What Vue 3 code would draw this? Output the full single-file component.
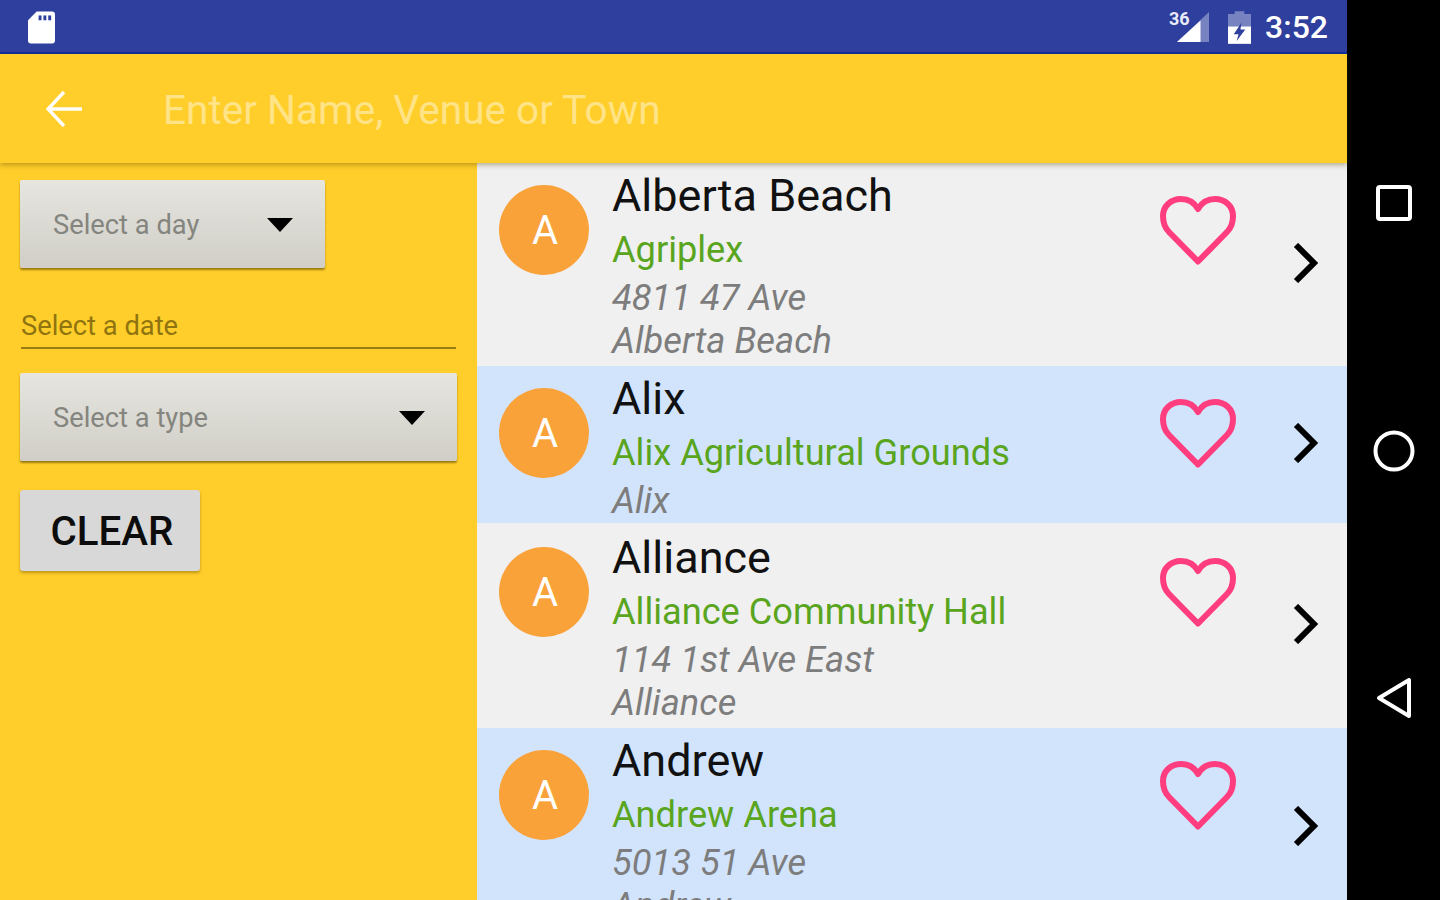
<script setup>
const rows = [
  { title: "Alberta Beach", venue: "Agriplex", lines: ["4811 47 Ave", "Alberta Beach"] },
  { title: "Alix", venue: "Alix Agricultural Grounds", lines: ["Alix"] },
  { title: "Alliance", venue: "Alliance Community Hall", lines: ["114 1st Ave East", "Alliance"] },
  { title: "Andrew", venue: "Andrew Arena", lines: ["5013 51 Ave", "Andrew"] },
];
</script>

<template>
  <div class="device">
    <div class="screen">
      <div class="status">
        <svg class="sd" viewBox="0 0 28 33">
          <path d="M9 0H25a3 3 0 0 1 3 3V30a3 3 0 0 1-3 3H3a3 3 0 0 1-3-3V9z" fill="#fff" />
          <rect x="11" y="4" width="3" height="5" fill="#2f3f9e" />
          <rect x="16" y="4" width="3" height="5" fill="#2f3f9e" />
          <rect x="21" y="4" width="3" height="5" fill="#2f3f9e" />
        </svg>
        <div class="status-right">
          <span class="net">36</span>
          <svg class="signal" viewBox="0 0 34 32">
            <path d="M34 0V32H0z" fill="#fff" opacity="0.35" />
            <path d="M25 9V32H0z" fill="#fff" />
          </svg>
          <svg class="battery" viewBox="0 0 24 34">
            <path d="M7 3V0h10v3h7v31H0V3z" fill="#fff" opacity="0.35" />
            <path d="M0 16H24V34H0z" fill="#fff" />
            <path d="M14 12 6 24h5l-2 7 9-12h-5z" fill="#2f3f9e" />
          </svg>
          <span class="time">3:52</span>
        </div>
      </div>

      <div class="appbar">
        <svg class="back" viewBox="0 0 36 36">
          <path d="M36 18H2M18 1 2 18l16 17" fill="none" stroke="#fff" stroke-width="3.4" />
        </svg>
        <span class="search">Enter Name, Venue or Town</span>
      </div>

      <div class="content">
        <div class="filters">
          <div class="spinner day">
            <span>Select a day</span>
            <i class="caret"></i>
          </div>
          <div class="date">Select a date</div>
          <div class="spinner type">
            <span>Select a type</span>
            <i class="caret"></i>
          </div>
          <button class="clear">CLEAR</button>
        </div>

        <div class="list">
          <div v-for="(row, i) in rows" :key="row.title" class="row" :class="{ alt: i % 2 === 1 }">
            <div class="avatar">A</div>
            <div class="text">
              <div class="title">{{ row.title }}</div>
              <div class="venue">{{ row.venue }}</div>
              <div v-for="line in row.lines" :key="line" class="addr">{{ line }}</div>
            </div>
            <svg class="heart" viewBox="0 0 76 70">
              <path d="M38 65.5 9 36C3 30 3 24 3 20 3 10 11 3 21 3c7 0 13 3 17 10 4-7 10-10 17-10 10 0 18 7 18 17 0 4 0 10-6 16z" fill="none" stroke="#ff3d7f" stroke-width="6" stroke-linejoin="round" />
            </svg>
            <svg class="chevron" viewBox="0 0 26 40">
              <path d="M3 2 21 20 3 38" fill="none" stroke="#000" stroke-width="6" />
            </svg>
          </div>
        </div>
      </div>
    </div>

    <div class="nav">
      <svg class="nav-square" viewBox="0 0 36 36">
        <rect x="2" y="2" width="32" height="32" rx="2" fill="none" stroke="#fff" stroke-width="4" />
      </svg>
      <svg class="nav-circle" viewBox="0 0 42 42">
        <circle cx="21" cy="21" r="18.5" fill="none" stroke="#fff" stroke-width="4" />
      </svg>
      <svg class="nav-back" viewBox="0 0 36 42">
        <path d="M3 21 33 3V39z" fill="none" stroke="#fff" stroke-width="4" stroke-linejoin="round" />
      </svg>
    </div>
  </div>
</template>

<style>
html,
body {
  margin: 0;
  overflow: hidden;
}
</style>

<style scoped>
.device {
  width: 1440px;
  height: 900px;
  display: flex;
  overflow: hidden;
  background: #000;
  font-family: Roboto, "Liberation Sans", sans-serif;
}
.screen {
  width: 1347px;
  display: flex;
  flex-direction: column;
  background: #ffce2a;
}
.status {
  flex: none;
  display: flex;
  justify-content: space-between;
  align-items: center;
  padding: 2px 19px 0 28px;
  height: 50px;
  background: #2f3f9e;
  border-bottom: 2px solid #0d2ea0;
}
.sd {
  width: 27px;
  height: 33px;
}
.status-right {
  display: flex;
  align-items: center;
  position: relative;
}
.net {
  position: absolute;
  left: 1px;
  top: 0;
  font-size: 18px;
  font-weight: 700;
  color: #e8ebf8;
}
.signal {
  width: 32px;
  height: 32px;
  margin-left: 9px;
}
.battery {
  width: 23px;
  height: 33px;
  margin-left: 19px;
}
.time {
  margin-left: 14px;
  font-size: 32px;
  font-weight: 500;
  color: #fff;
}
.appbar {
  height: 109px;
  flex: none;
  display: flex;
  align-items: center;
  padding-left: 46px;
  box-shadow: 0 2px 5px rgba(90, 70, 0, 0.4);
  position: relative;
  z-index: 1;
}
.back {
  width: 36px;
  height: 36px;
}
.search {
  margin-left: 81px;
  padding-top: 3px;
  font-size: 40.6px;
  color: rgba(255, 255, 255, 0.45);
}
.content {
  flex: 1;
  display: flex;
  min-height: 0;
}
.filters {
  width: 477px;
  flex: none;
  box-sizing: border-box;
  padding: 17px 20px 0;
  display: flex;
  flex-direction: column;
  align-items: flex-start;
}
.spinner {
  height: 88px;
  box-sizing: border-box;
  display: flex;
  align-items: center;
  justify-content: space-between;
  padding: 1px 32px 0 33px;
  background: linear-gradient(#e6e5df, #d0cec7);
  border-radius: 2px;
  box-shadow: 0 2px 2px rgba(90, 70, 0, 0.6);
  font-size: 27.3px;
  color: #85857f;
}
.day {
  width: 305px;
}
.type {
  width: 437px;
}
.caret {
  width: 0;
  height: 0;
  border-left: 13px solid transparent;
  border-right: 13px solid transparent;
  border-top: 14px solid #000;
}
.date {
  width: 435px;
  margin: 38px 0 24px 1px;
  height: 43px;
  line-height: 40px;
  box-sizing: border-box;
  border-bottom: 2px solid #9a7d12;
  font-size: 27.3px;
  color: #8f7410;
}
.clear {
  width: 180px;
  height: 81px;
  margin-top: 29px;
  padding: 2px 0 0 4px;
  border: 0;
  border-radius: 3px;
  background: #d8d8d8;
  box-shadow: 0 2px 3px rgba(90, 70, 0, 0.4);
  font-family: inherit;
  font-size: 40.3px;
  font-weight: 500;
  color: #0c0c0c;
}
.list {
  flex: 1;
  min-width: 0;
}
.row {
  position: relative;
  display: flex;
  align-items: flex-start;
  background: #f0f0f0;
  padding-bottom: 4px;
}
.row.alt {
  background: #d2e4fc;
  padding-bottom: 1px;
}
.row:nth-child(3) {
  padding-top: 2px;
}
.avatar {
  width: 90px;
  height: 90px;
  flex: none;
  margin: 22px 0 0 22px;
  border-radius: 50%;
  background: #f9a23a;
  color: #fff;
  font-size: 40px;
  line-height: 92px;
  text-indent: 2px;
  text-align: center;
}
.text {
  flex: 1;
  min-width: 0;
  margin-left: 23px;
  padding-top: 1px;
}
.title {
  font-size: 45px;
  line-height: 64px;
  color: #111;
}
.venue {
  font-size: 36.2px;
  line-height: 44px;
  color: #5aa51e;
}
.addr {
  font-size: 36.3px;
  font-style: italic;
  line-height: 43px;
  color: #7d7d7d;
  margin-top: 4px;
}
.addr + .addr {
  margin-top: 0;
}
.heart {
  width: 76px;
  height: 70px;
  flex: none;
  margin: 33px 111px 0 0;
}
.chevron {
  position: absolute;
  right: 28px;
  top: 50%;
  width: 26px;
  height: 40px;
  margin-top: -22px;
}
.nav {
  flex: 1;
  display: flex;
  flex-direction: column;
  align-items: center;
  padding-top: 185px;
}
.nav-square {
  width: 36px;
  height: 36px;
}
.nav-circle {
  width: 42px;
  height: 42px;
  margin-top: 209px;
}
.nav-back {
  width: 36px;
  height: 42px;
  margin-top: 205px;
}
</style>
